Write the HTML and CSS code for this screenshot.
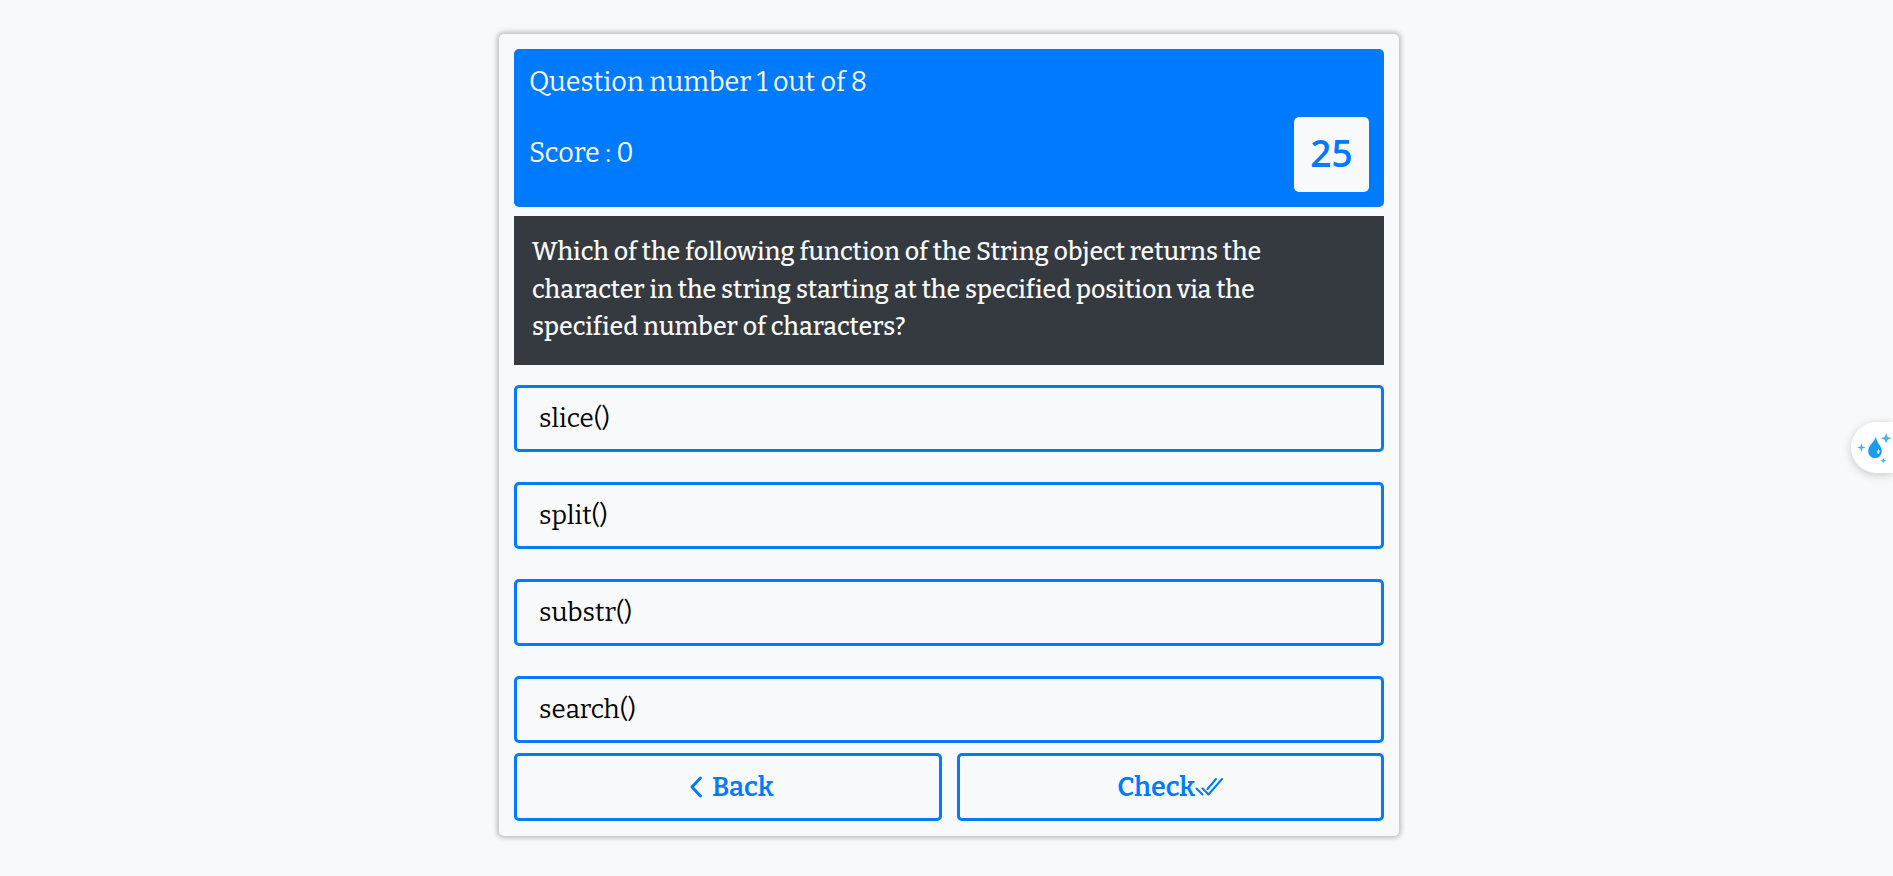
FILE: index.html
```
<!DOCTYPE html>
<html lang="en">
<head>
<meta charset="utf-8">
<meta name="viewport" content="width=device-width, initial-scale=1">
<title>Quiz</title>
<link rel="stylesheet" href="styles.css">
</head>
<body>
<main class="quiz">
  <header class="quiz-header">
    <p class="progress">Question number 1 out of 8</p>
    <div class="score-row">
      <p class="score">Score : 0</p>
      <div class="timer" role="timer">25</div>
    </div>
  </header>
  <h1 class="question">Which of the following function of the String object returns the character in the string starting at the specified position via the specified number of characters?</h1>
  <div class="options">
    <button class="option" type="button">slice()</button>
    <button class="option" type="button">split()</button>
    <button class="option" type="button">substr()</button>
    <button class="option" type="button">search()</button>
  </div>
  <div class="actions">
    <button class="action action-back" type="button">
      <svg class="icon-back" viewBox="-8 0 20 22" aria-hidden="true"><path d="M10.400 2 2 11l8.400 9"/></svg>
      <span>Back</span>
    </button>
    <button class="action" type="button">
      <span>Check</span>
      <svg class="icon-check" viewBox="0 0 28 20" aria-hidden="true"><path d="M1.500 11.500 7.500 17.500M7.500 11.500 13.500 17.500 27 2M12.500 12 21 2"/></svg>
    </button>
  </div>
</main>
<button class="assistant" type="button" aria-label="Assistant">
  <svg class="icon-drop" viewBox="0 0 36 36" aria-hidden="true">
    <path class="drop" d="M19 7c-1.500 5-8 9-8 15a7 7 0 0 0 14 0C25 16.500 19.500 13 19 7z"/>
    <path class="glint" d="M21.500 19.500c2 1.800 1.300 4.300-.3 5.200-1.300-.8-1.200-3.100.3-5.200z"/>
    <path class="spark" d="M29.500 3 31 7.100 35 8.500 31 9.900 29.500 14 28 9.900 24 8.500 28 7.100zM4 13.500 5.100 16.900 8.500 18 5.100 19.100 4 22.500 2.900 19.100-.5 18 2.900 16.900zM26.500 28.500 27.300 30.700 29.500 31.500 27.300 32.300 26.500 34.500 25.700 32.300 23.500 31.500 25.700 30.700z"/>
  </svg>
</button>
</body>
</html>
```
FILE: styles.css
```
* {
  box-sizing: border-box;
}

body {
  margin: 0;
  padding: 34px 0 34px 5px;
  background: #f8f9fa;
  font-family: Bitter, "Liberation Serif", serif;
  font-size: 27px;
}

button {
  font: inherit;
  cursor: pointer;
}

p,
h1 {
  margin: 0;
  font-weight: 400;
}

.quiz {
  max-width: 900px;
  margin: 0 auto;
  padding: 15px;
  border-radius: 5px;
  background: #f8f9fa;
  box-shadow: 0 0 5px 2px rgba(0, 0, 0, 0.25);
}

.quiz-header {
  padding: 15px;
  border-radius: 5px;
  background: #007bff;
  color: #f8f9fa;
}

.progress {
  margin-bottom: 17px;
  line-height: 36px;
}

.score-row {
  display: flex;
  justify-content: space-between;
}

.score {
  line-height: 73px;
}

.timer {
  width: 75px;
  height: 75px;
  border-radius: 5px;
  background: #f8f9fa;
  color: #007bff;
  font: 600 37px/72px "Open Sans", sans-serif;
  text-align: center;
}

.question {
  margin-top: 9px;
  padding: 18px 40px 18px 18px;
  background: #343a40;
  color: #f8f9fa;
  font-size: 25px;
  font-weight: 500;
  line-height: 1.5;
}

.options {
  display: flex;
  flex-direction: column;
  gap: 30px;
  margin-top: 20px;
}

.option {
  padding: 14px 22px;
  border: 3px solid #007bff;
  border-radius: 5px;
  background: transparent;
  color: #000;
  font-size: 26px;
  line-height: 33px;
  text-align: left;
}

.actions {
  display: grid;
  grid-template-columns: 1fr 1fr;
  gap: 15px;
  margin-top: 10px;
}

.action {
  display: flex;
  align-items: center;
  justify-content: center;
  padding: 14px;
  border: 3px solid #007bff;
  border-radius: 5px;
  background: transparent;
  color: #007bff;
  font-weight: 600;
  line-height: 34px;
}

.action-back {
  gap: 10px;
}

.icon-back,
.icon-check {
  fill: none;
  stroke: #007bff;
  stroke-linecap: round;
  stroke-linejoin: round;
}

.icon-back {
  width: 20px;
  height: 22px;
  stroke-width: 3;
}

.icon-check {
  width: 28px;
  height: 20px;
  stroke-width: 2;
}

.assistant {
  position: fixed;
  top: 422px;
  right: 0;
  display: flex;
  width: 42px;
  padding: 8px 0 8px 6px;
  border: 0;
  border-radius: 26px 0 0 26px;
  background: #fff;
  box-shadow: 0 2px 10px rgba(0, 0, 0, 0.2);
}

.icon-drop {
  flex: none;
  width: 36px;
  height: 35px;
  overflow: visible;
}

.drop {
  fill: #1c9cf0;
}

.glint {
  fill: #fff;
}

.spark {
  fill: #3cb4f7;
}
```
